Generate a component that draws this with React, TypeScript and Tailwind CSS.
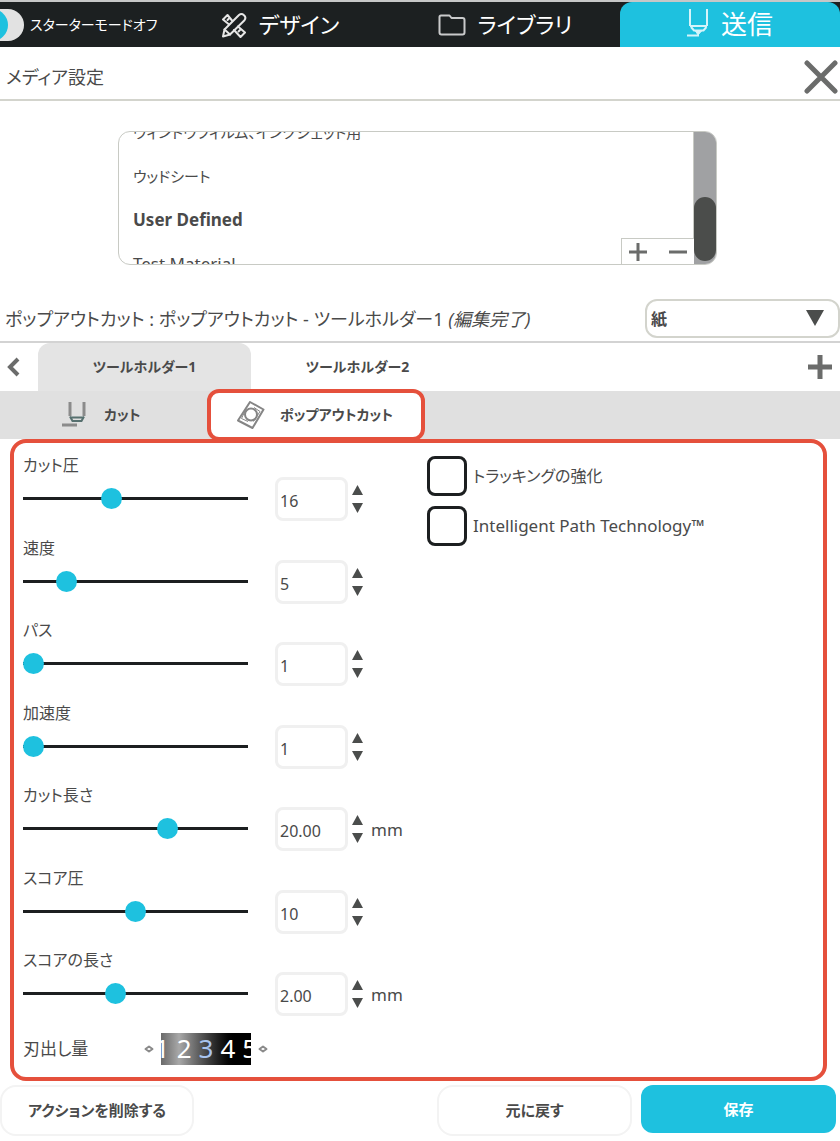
import React, { useState } from "react"

type Field = {
  id: string
  label: string
  value: number
  min: number
  max: number
  digits?: number
  unit?: string
}

const FIELDS: Field[] = [
  { id: "force", label: "カット圧", value: 16, min: 1, max: 40 },
  { id: "speed", label: "速度", value: 5, min: 1, max: 26 },
  { id: "passes", label: "パス", value: 1, min: 1, max: 10 },
  { id: "accel", label: "加速度", value: 1, min: 1, max: 5 },
  { id: "cut-length", label: "カット長さ", value: 20, min: 1, max: 30, digits: 2, unit: "mm" },
  { id: "score-force", label: "スコア圧", value: 10, min: 1, max: 19 },
  { id: "score-length", label: "スコアの長さ", value: 2, min: 0, max: 5, digits: 2, unit: "mm" },
]

const MATERIALS = [
  { name: "ウィンドウフィルム、インクジェット用", className: "text-[15px]" },
  { name: "ウッドシート", className: "text-[15px]" },
  { name: "User Defined", className: "text-[17px] font-bold" },
  { name: "Test Material", className: "text-[17px]" },
]

const DesignIcon: React.FC = () => (
  <svg width="26" height="26" viewBox="0 0 26 26" fill="none" stroke="#e6e6e6" strokeWidth="2" strokeLinejoin="round" strokeLinecap="round" aria-hidden="true">
    <path d="M11 8.500 6.500 3 2 7.500 7.500 12M17 14.500l7 6-4.500 4.500L13 18" />
    <path d="M2 24.500 3.500 17.500 18 3Q20.500 1 23 3.200t.5 5L9 22.500Z" />
    <path d="M3.500 17.500 9 22.500M8 6.500 6.500 8M19 18l-1.500 1.500" />
  </svg>
)

const FolderIcon: React.FC = () => (
  <svg width="28" height="22" viewBox="0 0 28 22" fill="none" stroke="#c9cacb" strokeWidth="2" strokeLinejoin="round" aria-hidden="true">
    <path d="M3 1.500H11.500L13.500 4H24.500Q26.500 4 26.500 6V18.500q0 2-2 2H3.500q-2 0-2-2V3Q1.500 1.500 3 1.500Z" />
  </svg>
)

const BladeIcon: React.FC = () => (
  <svg width="22" height="28" viewBox="0 0 22 28" fill="none" stroke="#d5f4fa" strokeWidth="2" className="-mt-1" aria-hidden="true">
    <path d="M3 0v17M20 0v17M3 17h17M4 18l3 3.500h9.500l3-3.500" />
    <path d="M8.500 22h6L11 26Z" fill="#d5f4fa" strokeWidth="1" />
    <path d="M0 26.500h12" />
  </svg>
)

const CutIcon: React.FC = () => (
  <svg width="24" height="26" viewBox="0 0 24 26" fill="none" stroke="#8b8b8b" strokeWidth="2" aria-hidden="true">
    <path d="M8 0v14M22 0v14" strokeWidth="3" />
    <path d="M8 14.500l2.500 4.500h9l2.500-4.500M8 15.500h14" stroke="#57706f" />
    <path d="M0 23h15" strokeWidth="3" />
  </svg>
)

const PopOutIcon: React.FC = () => (
  <svg width="28" height="28" viewBox="0 0 28 28" fill="none" stroke="#858585" strokeWidth="2" strokeLinejoin="round" aria-hidden="true">
    <path d="M13 1 26.500 8.500 15.500 27 1 19.500Z" />
    <circle cx="14" cy="13.500" r="6" />
    <path d="M9 8 4.500 17.500 11 20.500M16.500 20.500l6.500-10L17 6.500" strokeWidth="1" />
  </svg>
)

const Triangle: React.FC<{ down?: boolean }> = ({ down }) => (
  <svg width="11" height="10" viewBox="0 0 11 10" fill="#4b4d4c" aria-hidden="true">
    <path d={down ? "M0 0h11L5.500 10Z" : "M0 10h11L5.500 0Z"} />
  </svg>
)

const Diamond: React.FC = () => (
  <svg width="10" height="8" viewBox="0 0 10 8" fill="none" stroke="#8a8a8a" strokeWidth="2" strokeLinejoin="round" aria-hidden="true">
    <path d="M1.500 4 5 1.500 8.500 4 5 6.500Z" />
  </svg>
)

const FieldRow: React.FC<{ field: Field }> = ({ field }) => {
  const [value, setValue] = useState(field.value)
  const step = (by: number) => setValue(Math.min(field.max, Math.max(field.min, value + by)))

  return (
    <div className="flex items-end">
      <div className="flex w-[225px] flex-col gap-[13px] pb-3">
        <label htmlFor={field.id} className="leading-5">
          {field.label}
        </label>
        <input
          id={field.id}
          type="range"
          min={field.min}
          max={field.max}
          step="any"
          value={value}
          onChange={(e) => setValue(Number(e.target.value))}
          className="block h-[21px] w-full appearance-none bg-transparent [&::-webkit-slider-runnable-track]:h-[3px] [&::-webkit-slider-runnable-track]:bg-[#1c1f20] [&::-webkit-slider-thumb]:-mt-[9px] [&::-webkit-slider-thumb]:size-[21px] [&::-webkit-slider-thumb]:appearance-none [&::-webkit-slider-thumb]:rounded-full [&::-webkit-slider-thumb]:bg-[#1ec1df]"
        />
      </div>
      <input
        type="text"
        aria-label={field.label}
        value={value.toFixed(field.digits ?? 0)}
        onChange={(e) => setValue(Number(e.target.value) || field.min)}
        className="ml-[27px] h-11 w-[73px] rounded-lg border-3 border-[#f0f0f0] px-[2px] pt-1"
      />
      <div className="ml-1 flex h-11 flex-col justify-center gap-2">
        <button type="button" aria-label={`${field.label} +`} onClick={() => step(1)}>
          <Triangle />
        </button>
        <button type="button" aria-label={`${field.label} -`} onClick={() => step(-1)}>
          <Triangle down />
        </button>
      </div>
      {field.unit && <span className="ml-2 flex h-11 items-center text-[17px]">{field.unit}</span>}
    </div>
  )
}

const CheckRow: React.FC<{ id: string; label: string; className?: string }> = ({ id, label, className }) => (
  <div className="flex items-center gap-[6px]">
    <input
      id={id}
      type="checkbox"
      className="size-10 appearance-none rounded-lg border-3 border-[#1c1f20] checked:bg-[#1ec1df]"
    />
    <label htmlFor={id} className={className}>
      {label}
    </label>
  </div>
)

const Header: React.FC = () => (
  <header className="flex h-[47px] overflow-hidden border-t-2 border-[#c6c7c7] bg-[#1c2021] text-white">
    <div className="flex w-[170px] items-center gap-[6px]">
      <input
        id="starter"
        type="checkbox"
        className="-ml-7 flex h-8 w-[52px] shrink-0 appearance-none items-center rounded-full bg-[#e2e2e2] before:ml-1 before:size-8 before:rounded-full before:bg-[#1ec1df]"
      />
      <label htmlFor="starter" className="text-sm whitespace-nowrap">
        スターターモードオフ
      </label>
    </div>
    <nav className="grid flex-1 grid-cols-3 gap-[5px] text-[22px]">
      <a href="#design" className="flex items-center justify-center gap-3">
        <DesignIcon />
        デザイン
      </a>
      <a href="#library" className="flex items-center justify-center gap-3">
        <FolderIcon />
        ライブラリ
      </a>
      <a href="#send" className="flex items-center justify-center gap-3 rounded-t-xl bg-[#1ec1df] text-[26px]">
        <BladeIcon />
        送信
      </a>
    </nav>
  </header>
)

const MaterialList: React.FC = () => (
  <div className="relative mr-[123px] ml-[118px] flex h-[134px] overflow-hidden rounded-xl border border-[#c8cac4]">
    <ul className="flex flex-1 flex-col justify-center">
      {MATERIALS.map((item) => (
        <li key={item.name} className={`flex h-11 shrink-0 items-center pl-[14px] ${item.className}`}>
          {item.name}
        </li>
      ))}
    </ul>
    <div className="flex w-[23px] flex-col justify-end border-l border-[#c8cac4] bg-[#a0a1a3] pb-[3px]">
      <div className="h-[64px] rounded-full bg-[#4b4d4b]" />
    </div>
    <div className="absolute right-[22px] bottom-0 flex h-[26px] w-[73px] items-center justify-between border-t border-l border-[#c8cac4] bg-white px-[6px]">
      <button type="button" aria-label="追加">
        <svg width="20" height="20" viewBox="0 0 20 20" stroke="#6b6c6b" strokeWidth="3" aria-hidden="true">
          <path d="M1 10h18M10 1v18" />
        </svg>
      </button>
      <button type="button" aria-label="削除">
        <svg width="20" height="20" viewBox="0 0 20 20" stroke="#6b6c6b" strokeWidth="3" aria-hidden="true">
          <path d="M1 10h18" />
        </svg>
      </button>
    </div>
  </div>
)

const App: React.FC = () => (
  <div className="flex min-h-screen flex-col bg-white font-['Noto_Sans','Noto_Sans_CJK_JP',sans-serif] text-base text-[#4a4a4a] [font-feature-settings:'palt']">
    <Header />

    <div className="flex h-[54px] items-center justify-between border-b-2 border-[#d3d4cd] pt-2 pr-[2px] pl-[6px]">
      <h1 className="text-lg">メディア設定</h1>
      <button type="button" aria-label="閉じる">
        <svg width="34" height="34" viewBox="0 0 34 34" stroke="#6b6c6b" strokeWidth="5" strokeLinecap="round" aria-hidden="true">
          <path d="M3 3l28 28M31 3 3 31" />
        </svg>
      </button>
    </div>

    <div className="pt-[30px] pb-[34px]">
      <MaterialList />
    </div>

    <div className="flex h-[44px] items-start justify-between border-b-2 border-[#d3d3d3] pl-[5px]">
      <h2 className="text-lg leading-10">
        ポップアウトカット : ポップアウトカット - ツールホルダー1 <em>(編集完了)</em>
      </h2>
      <div className="relative">
        <select
          aria-label="素材の種類"
          defaultValue="paper"
          className="h-[39px] w-[195px] appearance-none rounded-xl border-2 border-[#d3d4cd] bg-white px-1 font-bold"
        >
          <option value="paper">紙</option>
          <option value="card">カード</option>
        </select>
        <svg width="18" height="16" viewBox="0 0 18 16" fill="#4b4d4c" className="pointer-events-none absolute top-[11px] right-4" aria-hidden="true">
          <path d="M0 0h18L9 16Z" />
        </svg>
      </div>
    </div>

    <div className="flex h-12 items-stretch pr-2 text-sm font-bold">
      <button type="button" aria-label="戻る" className="flex w-[38px] items-center pl-[6px]">
        <svg width="14" height="20" viewBox="0 0 14 20" fill="none" stroke="#6b6c6b" strokeWidth="4" aria-hidden="true">
          <path d="M12 2 4 10l8 8" />
        </svg>
      </button>
      <button type="button" className="w-[213px] rounded-t-xl bg-[#e4e4e4]">
        ツールホルダー1
      </button>
      <button type="button" className="w-[213px]">
        ツールホルダー2
      </button>
      <button type="button" aria-label="ツールを追加" className="ml-auto">
        <svg width="24" height="24" viewBox="0 0 24 24" stroke="#6b6c6b" strokeWidth="5" aria-hidden="true">
          <path d="M0 12h24M12 0v24" />
        </svg>
      </button>
    </div>

    <div className="flex h-12 items-center bg-[#e0e0e0] text-sm font-bold">
      <button type="button" className="flex w-[207px] items-center gap-[18px] pl-[62px]">
        <CutIcon />
        カット
      </button>
      <button
        type="button"
        className="relative flex h-[52px] w-[218px] items-center gap-[15px] rounded-xl border-4 border-[#e5503c] bg-white pl-[26px]"
      >
        <PopOutIcon />
        ポップアウトカット
      </button>
    </div>

    <main className="mr-[13px] ml-[10px] flex flex-1 rounded-2xl border-4 border-[#e5503c] px-[9px] py-3">
      <div className="flex w-[404px] flex-col justify-between gap-2">
        {FIELDS.map((field) => (
          <FieldRow key={field.id} field={field} />
        ))}
        <div className="flex items-center">
          <span className="w-[121px] text-[17px]">刃出し量</span>
          <button type="button" aria-label="刃出し量 -">
            <Diamond />
          </button>
          <div className="mx-[7px] flex h-8 w-[90px] items-center justify-center gap-[7px] overflow-hidden bg-linear-to-r from-[#6a6a6a] via-[#a8a8a8] via-20% to-black to-85% text-[26px] text-white">
            <span>1</span>
            <span>2</span>
            <span className="text-[#a9c4ee]">3</span>
            <span>4</span>
            <span>5</span>
          </div>
          <button type="button" aria-label="刃出し量 +">
            <Diamond />
          </button>
        </div>
      </div>
      <div className="flex flex-col gap-[10px] pt-px">
        <CheckRow id="tracking" label="トラッキングの強化" />
        <CheckRow id="ipt" label="Intelligent Path Technology™" className="text-[17px]" />
      </div>
    </main>

    <footer className="flex items-start gap-[9px] pt-1 pr-1 pb-[5px] text-[15px] font-bold">
      <button type="button" className="mr-auto h-[51px] w-[194px] rounded-2xl border-2 border-[#f3f3f3]">
        アクションを削除する
      </button>
      <button type="button" className="h-[51px] w-[195px] rounded-2xl border-2 border-[#f3f3f3]">
        元に戻す
      </button>
      <button type="button" className="h-12 w-[195px] rounded-xl bg-[#1ec1df] text-white">
        保存
      </button>
    </footer>
  </div>
)

export default App
